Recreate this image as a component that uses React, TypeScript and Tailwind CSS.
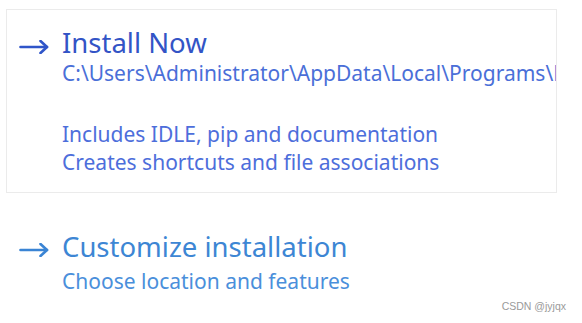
import React from "react";

function Arrow({ color }: { color: string }) {
  return (
    <svg width="30" height="14" viewBox="0 0 30 14" fill="none" stroke={color} strokeWidth="2.6" strokeLinecap="round" strokeLinejoin="round">
      <path d="M1.5 7 H28" />
      <path d="M21.5 1 L28 7 L21.5 13" />
    </svg>
  );
}

export default function App() {
  return (
    <div className="relative w-[582px] h-[323px] bg-white overflow-hidden" style={{ fontFamily: '"Noto Sans", "Open Sans", sans-serif' }}>
      <div className="pt-[9px] pl-[6px]">
        <div className="w-[551px] h-[184px] border border-[#ebebeb] overflow-hidden flex pl-[12px] pt-[17px]">
          <div className="w-[43px] shrink-0 pt-[13px]">
            <Arrow color="#2f55c9" />
          </div>
          <div className="flex flex-col whitespace-nowrap">
            <span className="text-[27.5px] leading-[32px] text-[#3354c6]">Install Now</span>
            <div className="mt-[2px] text-[21px] leading-[24px] text-[#4a6fd8]">
              C:\Users\Administrator\AppData\Local\Programs\Python\Python311
            </div>
            <div className="mt-[35px] text-[21px] leading-[28px] text-[#4d6edb]">
              <div>Includes IDLE, pip and documentation</div>
              <div>Creates shortcuts and file associations</div>
            </div>
          </div>
        </div>
      </div>
      <div className="flex pl-[19px] mt-[38px]">
        <div className="w-[43px] shrink-0 pt-[12px]">
          <Arrow color="#3a84d4" />
        </div>
        <div className="flex flex-col whitespace-nowrap">
          <span className="text-[27.5px] leading-[32px] text-[#3d86d4]">Customize installation</span>
          <div className="mt-[6px] text-[21px] leading-[24px] text-[#4a8fdb]">
            Choose location and features
          </div>
        </div>
      </div>
      <div className="absolute right-[16px] bottom-[8px] text-[10.5px] text-[#9a9a9a]" style={{ fontFamily: '"Liberation Sans", Arial, sans-serif' }}>
        CSDN @jyjqx
      </div>
    </div>
  );
}
